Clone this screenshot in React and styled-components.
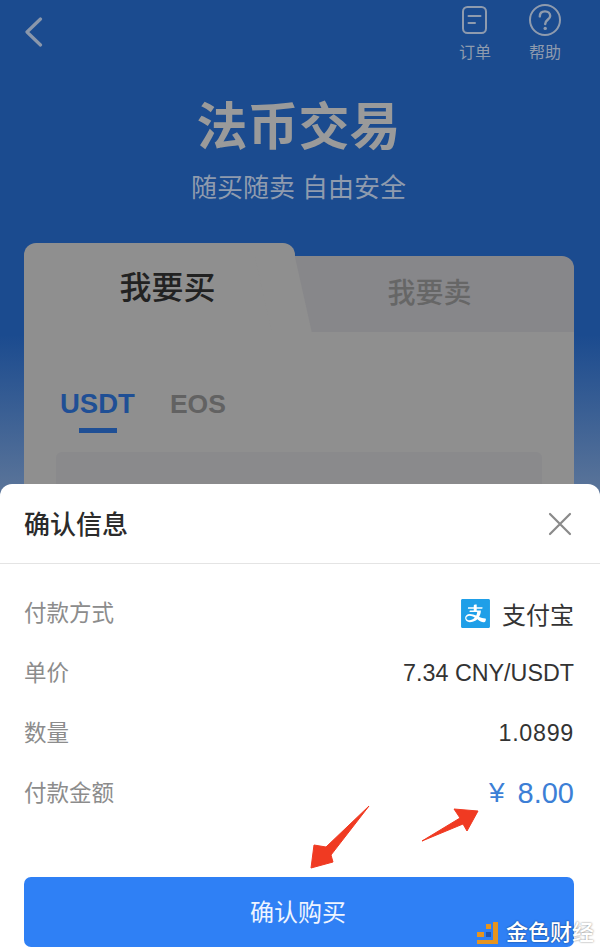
import React from 'react';
import styled, { createGlobalStyle } from 'styled-components';
import { AiFillAlipaySquare } from 'react-icons/ai';

const GlobalStyle = createGlobalStyle`
    html, body {
        margin: 0;
        padding: 0;
        background: #fff;
    }
    * {
        box-sizing: border-box;
    }
`;

const CJK = `"Liberation Sans", "Noto Sans CJK SC", sans-serif`;

const Page = styled.div`
    position: relative;
    width: 600px;
    height: 952px;
    overflow: hidden;
    font-family: ${CJK};
    background: linear-gradient(#1b4b8f 0, #1b4b8f 335px, #5a7499 490px);
`;

const TopBar = styled.div`
    display: flex;
    justify-content: space-between;
    height: 90px;
    padding: 4px 39px 0 24px;
`;

const BackButton = styled.div`
    padding-top: 13px;
    color: #8a97ab;
`;

const TopActions = styled.div`
    display: flex;
    gap: 38px;
`;

const TopAction = styled.div`
    display: flex;
    flex-direction: column;
    align-items: center;
    width: 32px;
    color: #8f9bae;
`;

const ActionIcon = styled.svg`
    display: block;
    width: 32px;
    height: 32px;
`;

const ActionLabel = styled.span`
    margin-top: 5px;
    font-size: 16px;
    line-height: 24px;
    white-space: nowrap;
`;

const Hero = styled.div`
    display: flex;
    flex-direction: column;
    align-items: center;
    height: 153px;
    padding-right: 3px;
`;

const Title = styled.h1`
    margin: 1px 0 0;
    font-size: 51px;
    font-weight: 700;
    line-height: 74px;
    color: #9a9a9a;
`;

const Subtitle = styled.div`
    margin-top: 5px;
    font-size: 26px;
    line-height: 36px;
    color: #8f9bae;
`;

const Card = styled.div`
    margin: 0 26px 0 24px;
`;

const TabRow = styled.div`
    display: flex;
    height: 89px;
`;

const BuyTab = styled.div`
    position: relative;
    z-index: 1;
    width: 271px;
    padding: 22px 0 0 16px;
    text-align: center;
    font-size: 32px;
    font-weight: 500;
    line-height: 46px;
    color: #222;
    background: #8f8f8f;
    border-radius: 12px 12px 0 0;

    &::after {
        content: '';
        position: absolute;
        top: 14px;
        right: 0;
        bottom: 0;
        width: 40px;
        z-index: -1;
        background: #8f8f8f;
        transform: skewX(12.6deg);
        transform-origin: top right;
    }
`;

const SellTab = styled.div`
    flex: 1;
    margin-top: 13px;
    padding: 17px 10px 0 0;
    text-align: center;
    font-size: 28px;
    font-weight: 500;
    line-height: 42px;
    color: #666;
    background: #87878a;
    border-top-right-radius: 12px;
`;

const CardBody = styled.div`
    height: 180px;
    padding: 52px 32px 0 32px;
    background: #8f8f8f;
`;

const CoinTabs = styled.div`
    display: flex;
    gap: 35px;
    padding-left: 4px;
`;

const CoinTab = styled.div`
    position: relative;
    height: 48px;
    font-size: ${(props) => (props.$active ? '27.5px' : '26.5px')};
    font-weight: 700;
    line-height: 40px;
    color: ${(props) => (props.$active ? '#1f4f95' : '#626262')};

    ${(props) => props.$active && `
        &::after {
            content: '';
            position: absolute;
            left: 19px;
            bottom: -1px;
            width: 38px;
            height: 5px;
            background: #1f4f95;
        }
    `}
`;

const AmountPanel = styled.div`
    height: 60px;
    margin-top: 20px;
    background: #8a8a8c;
    border-radius: 6px;
`;

const Sheet = styled.div`
    position: absolute;
    left: 0;
    right: 0;
    top: 484px;
    bottom: 0;
    display: flex;
    flex-direction: column;
    background: #fff;
    border-radius: 12px 12px 0 0;
`;

const SheetHeader = styled.div`
    display: flex;
    align-items: center;
    justify-content: space-between;
    height: 80px;
    padding: 0 28px 0 24px;
    border-bottom: 1px solid #e4e4e4;
`;

const SheetTitle = styled.div`
    margin-bottom: 3px;
    font-size: 26px;
    font-weight: 500;
    color: #2b2b2b;
`;

const CloseIcon = styled.svg`
    display: block;
    width: 24px;
    height: 24px;
    color: #8a8a8a;
`;

const InfoList = styled.div`
    padding: 19px 26px 0 24px;
`;

const InfoRow = styled.div`
    display: flex;
    align-items: center;
    justify-content: space-between;
    height: 60px;
`;

const InfoLabel = styled.span`
    margin-bottom: 4px;
    font-size: 22.5px;
    color: #8c8c8c;
`;

const InfoValue = styled.span`
    display: flex;
    align-items: center;
    font-size: 23.3px;
    letter-spacing: ${(props) => props.$spacing || '0'};
    color: #333;
`;

const PayName = styled.span`
    margin-left: 8px;
    font-size: 24px;
`;

const AmountValue = styled.span`
    display: flex;
    align-items: center;
    gap: 13px;
    font-size: 29px;
    color: #3c7fd6;
`;

const Yen = styled.span`
    font-size: 28px;
`;

const ConfirmButton = styled.button`
    display: block;
    width: 550px;
    height: 70px;
    margin: auto 0 5px 24px;
    border: 0;
    border-radius: 7px;
    padding: 0 2px 4px 0;
    font-family: ${CJK};
    font-size: 24px;
    color: #eef4ff;
    background: #2f80f5;
`;

const Arrows = styled.svg`
    position: absolute;
    left: 300px;
    top: 800px;
    width: 190px;
    height: 75px;
`;

const Watermark = styled.div`
    position: absolute;
    left: 477px;
    top: 919px;
    display: flex;
    align-items: center;
    gap: 8px;
    font-size: 22px;
    font-weight: 500;
    line-height: 28px;
    color: #fff;
    text-shadow: 0 0 2px rgba(0, 0, 0, 0.55);
`;

const WatermarkLogo = styled.svg`
    display: block;
    width: 21px;
    height: 22px;
`;

const App = () => {
    return (
        <Page>
            <GlobalStyle />
            <TopBar>
                <BackButton>
                    <svg width="19" height="30" viewBox="0 0 19 30" fill="none">
                        <path d="M16.5 2 L3 15 L16.5 28" stroke="currentColor" strokeWidth="3.2" strokeLinecap="round" strokeLinejoin="round" />
                    </svg>
                </BackButton>
                <TopActions>
                    <TopAction>
                        <ActionIcon viewBox="0 0 32 32" fill="none">
                            <rect x="4" y="3" width="23" height="26" rx="4.5" stroke="currentColor" strokeWidth="2" />
                            <path d="M9.5 12 H21.5 M9.5 19 H16" stroke="currentColor" strokeWidth="2" strokeLinecap="round" />
                        </ActionIcon>
                        <ActionLabel>订单</ActionLabel>
                    </TopAction>
                    <TopAction>
                        <ActionIcon viewBox="0 0 32 32" fill="none">
                            <circle cx="16" cy="16" r="15" stroke="currentColor" strokeWidth="2" />
                            <path d="M10.8 12.4 C10.8 9.2 13 7.4 16 7.4 C19 7.4 21.2 9.3 21.2 12 C21.2 15.4 16.2 15.8 16.2 20" stroke="currentColor" strokeWidth="2.4" strokeLinecap="round" />
                            <circle cx="16.2" cy="24.4" r="1.7" fill="currentColor" />
                        </ActionIcon>
                        <ActionLabel>帮助</ActionLabel>
                    </TopAction>
                </TopActions>
            </TopBar>

            <Hero>
                <Title>法币交易</Title>
                <Subtitle>随买随卖 自由安全</Subtitle>
            </Hero>

            <Card>
                <TabRow>
                    <BuyTab>我要买</BuyTab>
                    <SellTab>我要卖</SellTab>
                </TabRow>
                <CardBody>
                    <CoinTabs>
                        <CoinTab $active>USDT</CoinTab>
                        <CoinTab>EOS</CoinTab>
                    </CoinTabs>
                    <AmountPanel />
                </CardBody>
            </Card>

            <Sheet>
                <SheetHeader>
                    <SheetTitle>确认信息</SheetTitle>
                    <CloseIcon viewBox="0 0 24 24" fill="none">
                        <path d="M2 2 L22 22 M22 2 L2 22" stroke="currentColor" strokeWidth="2.2" strokeLinecap="round" />
                    </CloseIcon>
                </SheetHeader>
                <InfoList>
                    <InfoRow>
                        <InfoLabel>付款方式</InfoLabel>
                        <InfoValue>
                            <AiFillAlipaySquare size={37} color="#1f9fe8" />
                            <PayName>支付宝</PayName>
                        </InfoValue>
                    </InfoRow>
                    <InfoRow>
                        <InfoLabel>单价</InfoLabel>
                        <InfoValue>7.34 CNY/USDT</InfoValue>
                    </InfoRow>
                    <InfoRow>
                        <InfoLabel>数量</InfoLabel>
                        <InfoValue $spacing="0.7px">1.0899</InfoValue>
                    </InfoRow>
                    <InfoRow>
                        <InfoLabel>付款金额</InfoLabel>
                        <AmountValue>
                            <Yen>¥</Yen>
                            8.00
                        </AmountValue>
                    </InfoRow>
                </InfoList>
                <ConfirmButton>确认购买</ConfirmButton>
            </Sheet>

            <Arrows viewBox="0 0 190 75">
                <path d="M69 6 L26 47 L14 45 L11 68 L33 62 L31 55 Z" fill="#f03a22" stroke="#f03a22" strokeWidth="1" strokeLinejoin="round" />
                <path d="M122 41 L160 18 L154 9 L178 11 L167 31 L163 24 Z" fill="#f03a22" stroke="#f03a22" strokeWidth="1" strokeLinejoin="round" />
            </Arrows>

            <Watermark>
                <WatermarkLogo viewBox="0 0 21 22">
                    <path d="M0 10 H7 V15 H0 Z M9 2 H14 V7 H9 Z M16 0 H21 V22 H0 V18 H16 Z" fill="#e6941f" />
                    <path d="M9 10 H14 V15 H9 Z" fill="#1f56b4" />
                </WatermarkLogo>
                <span>金色财经</span>
            </Watermark>
        </Page>
    );
};

export default App;
